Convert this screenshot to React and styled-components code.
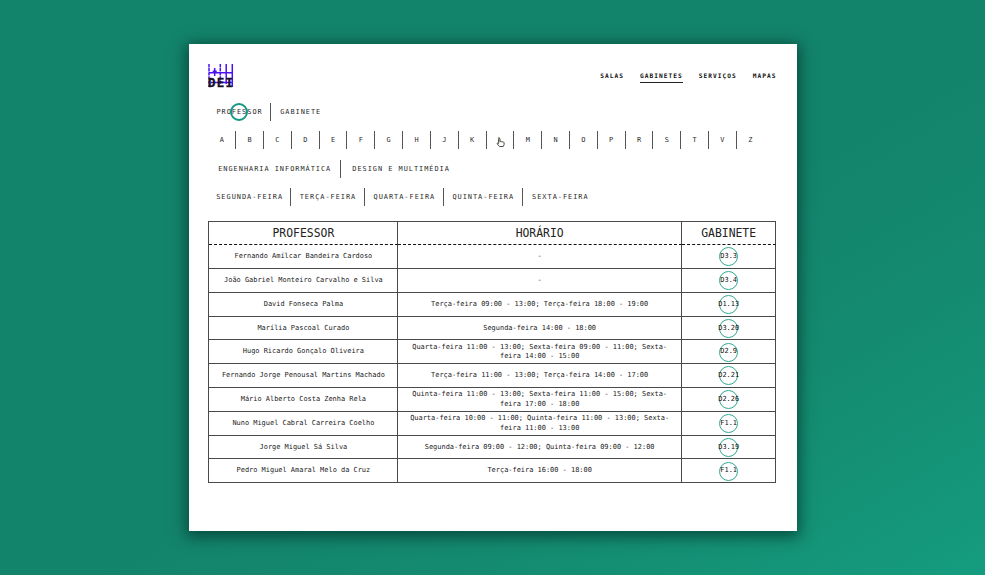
import React from "react";
import styled, { createGlobalStyle } from "styled-components";

const GlobalStyle = createGlobalStyle`
  * { box-sizing: border-box; }
  body { margin: 0; font-family: "DejaVu Sans Mono", monospace; color: #222; }
`;

const Page = styled.div`
  width: 985px;
  height: 575px;
  overflow: hidden;
  padding: 44px 0 0 189px;
  background: linear-gradient(150deg, #13846c 0%, #13846c 55%, #148a70 72%, #149377 87%, #159c7f 100%);
`;

const Card = styled.main`
  width: 608px;
  height: 487px;
  padding: 20px 20px 0 19.4px;
  background: #fff;
  box-shadow: 0 3px 14px 3px rgba(0, 45, 35, 0.65);
`;

const Header = styled.header`
  display: flex;
  justify-content: space-between;
  align-items: center;
  height: 24px;
`;

const Logo = styled.svg`
  width: 26px;
  height: 24px;
  overflow: visible;
`;

const Nav = styled.nav`
  display: flex;
  gap: 16px;
  margin-right: 0.5px;
`;

const NavLink = styled.a`
  height: 13px;
  line-height: 12px;
  font-size: 6.2px;
  font-weight: 700;
  letter-spacing: 1.02px;
  color: #111;
  border-bottom: 1px solid ${(p) => (p.$active ? "#222" : "transparent")};
`;

const Filters = styled.section`
  display: grid;
  row-gap: 10.5px;
  padding-top: 14.6px;
`;

const FilterRow = styled.div`
  display: flex;
  height: 18px;
`;

const FilterItem = styled.button`
  position: relative;
  flex: none;
  display: flex;
  align-items: center;
  justify-content: center;
  width: ${(p) => p.$width}px;
  padding: 0 0 0 1px;
  border: 0;
  border-right: 1px solid #555;
  background: none;
  font: 6.9px "DejaVu Sans Mono", monospace;
  letter-spacing: 0.99px;
  white-space: nowrap;
  color: #2a2a2a;
  &:last-child { border-right-color: transparent; }
`;

const Marker = styled.span`
  position: absolute;
  left: 22px;
  top: 0;
  width: 18px;
  height: 18px;
  border: 2px solid #169783;
  border-radius: 50%;
`;

const Pointer = styled.svg`
  position: absolute;
  left: 9px;
  top: 6px;
  width: 9px;
  height: 11px;
`;

const Table = styled.div`
  display: grid;
  grid-template-columns: 189px 283.5px 94.5px;
  grid-template-rows: 23.6px repeat(10, 23.8px);
  width: 568px;
  margin-top: 14.6px;
  border: solid #4a4a4a;
  border-width: 1px 0 0 1px;
`;

const HeadCell = styled.div`
  display: flex;
  align-items: center;
  justify-content: center;
  padding-top: 1px;
  font-size: 11.4px;
  color: #222;
  border-right: 1px solid #4a4a4a;
  border-bottom: 1px dashed #111;
`;

const Cell = styled.div`
  display: flex;
  align-items: center;
  justify-content: center;
  padding: 0.6px 10px 0;
  text-align: center;
  font-size: 6.95px;
  line-height: 9.4px;
  border-right: 1px solid #4a4a4a;
  border-bottom: 1px solid #4a4a4a;
`;

const Room = styled.span`
  display: flex;
  align-items: center;
  justify-content: center;
  width: 19px;
  height: 19px;
  border: 1.4px solid #35a890;
  border-radius: 50%;
  color: #111;
`;

const Line = styled.span`
  display: block;
  white-space: nowrap;
`;

const nav = ["SALAS", "GABINETES", "SERVIÇOS", "MAPAS"];
const letters = "ABCDEFGHJKLMNOPRSTVZ".split("");
const courses = [["ENGENHARIA INFORMÁTICA", 132.7], ["DESIGN E MULTIMÉDIA", 120]];
const days = [
  ["SEGUNDA-FEIRA", 82.5],
  ["TERÇA-FEIRA", 74.2],
  ["QUARTA-FEIRA", 78.6],
  ["QUINTA-FEIRA", 79.2],
  ["SEXTA-FEIRA", 75],
];
const rows = [
  ["Fernando Amílcar Bandeira Cardoso", ["-"], "D3.3"],
  ["João Gabriel Monteiro Carvalho e Silva", ["-"], "D3.4"],
  ["David Fonseca Palma", ["Terça-feira 09:00 - 13:00; Terça-feira 18:00 - 19:00"], "D1.13"],
  ["Marília Pascoal Curado", ["Segunda-feira 14:00 - 18:00"], "D3.20"],
  ["Hugo Ricardo Gonçalo Oliveira", ["Quarta-feira 11:00 - 13:00; Sexta-feira 09:00 - 11:00; Sexta-", "feira 14:00 - 15:00"], "D2.9"],
  ["Fernando Jorge Penousal Martins Machado", ["Terça-feira 11:00 - 13:00; Terça-feira 14:00 - 17:00"], "D2.21"],
  ["Mário Alberto Costa Zenha Rela", ["Quinta-feira 11:00 - 13:00; Sexta-feira 11:00 - 15:00; Sexta-", "feira 17:00 - 18:00"], "D2.26"],
  ["Nuno Miguel Cabral Carreira Coelho", ["Quarta-feira 10:00 - 11:00; Quinta-feira 11:00 - 13:00; Sexta-", "feira 11:00 - 13:00"], "F1.1"],
  ["Jorge Miguel Sá Silva", ["Segunda-feira 09:00 - 12:00; Quinta-feira 09:00 - 12:00"], "D3.19"],
  ["Pedro Miguel Amaral Melo da Cruz", ["Terça-feira 16:00 - 18:00"], "F1.1"],
];

export default function App() {
  return (
    <Page>
      <GlobalStyle />
      <Card>
        <Header>
          <Logo viewBox="0 0 26 24">
            <g stroke="#4a12f0" strokeWidth="1.5" fill="none">
              <path d="M18.2 0V20M24.3 0V23M1 8.7H25M3 18.5H25" />
              <path d="M1 0V23M12.3 0V20" strokeDasharray="3.4 0.7" />
              <path d="M6.7 4V12M4.7 7.2H8.7" />
            </g>
            <text x="0" y="23" fontSize="12.5" fontWeight="700" textLength="25" fill="#15101f" stroke="#15101f" strokeWidth="0.3">DEI</text>
          </Logo>
          <Nav>
            {nav.map((n) => <NavLink key={n} $active={n === "GABINETES"}>{n}</NavLink>)}
          </Nav>
        </Header>
        <Filters>
          <FilterRow>
            <FilterItem $width={62.3}>PROFESSOR<Marker /></FilterItem>
            <FilterItem $width={60}>GABINETE</FilterItem>
          </FilterRow>
          <FilterRow>
            {letters.map((l) => (
              <FilterItem key={l} $width={27.82}>
                {l}
                {l === "L" && (
                  <Pointer viewBox="0 0 10 12">
                    <path
                      d="M3 7V2.2C3 1 4.4 1 4.4 2.2V5C5 4.5 5.8 4.7 6 5.2C6.6 4.8 7.4 5 7.6 5.6C8.3 5.3 9 5.7 9 6.5V8.4L8 10.5H4L1.3 7.5C1 6.6 2 6.2 3 7Z"
                      fill="#fff" stroke="#333" strokeWidth="1"
                    />
                  </Pointer>
                )}
              </FilterItem>
            ))}
          </FilterRow>
          <FilterRow>{courses.map(([t, w]) => <FilterItem key={t} $width={w}>{t}</FilterItem>)}</FilterRow>
          <FilterRow>{days.map(([t, w]) => <FilterItem key={t} $width={w}>{t}</FilterItem>)}</FilterRow>
        </Filters>
        <Table>
          <HeadCell>PROFESSOR</HeadCell>
          <HeadCell>HORÁRIO</HeadCell>
          <HeadCell>GABINETE</HeadCell>
          {rows.map(([name, hours, room]) => (
            <React.Fragment key={name}>
              <Cell>{name}</Cell>
              <Cell><div>{hours.map((h) => <Line key={h}>{h}</Line>)}</div></Cell>
              <Cell><Room>{room}</Room></Cell>
            </React.Fragment>
          ))}
        </Table>
      </Card>
    </Page>
  );
}
